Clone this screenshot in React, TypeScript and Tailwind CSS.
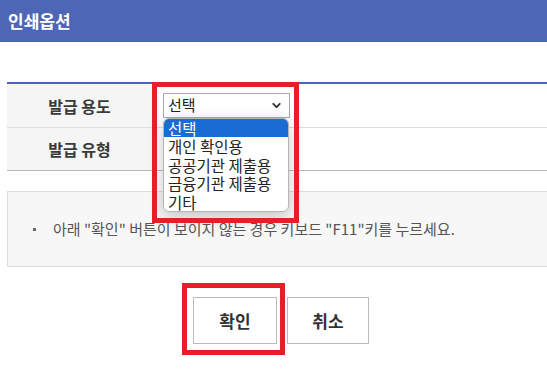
import { ChevronDown } from "lucide-react";

const options = ["선택", "개인 확인용", "공공기관 제출용", "금융기관 제출용", "기타"];

function Row({ label, children, last }: { label: string; children?: React.ReactNode; last?: boolean }) {
  return (
    <div className={`flex ${last ? "h-[42px]" : "h-[44px] border-b border-[#dddddd]"}`}>
      <div className="w-[145px] bg-[#f5f5f5] flex items-center justify-center text-[16px] font-semibold text-[#3a3a3a]">
        {label}
      </div>
      <div className="flex-1 flex items-center pl-[11px] bg-white">{children}</div>
    </div>
  );
}

export default function App() {
  return (
    <div className="relative w-[547px] h-[377px] overflow-hidden bg-white font-['Noto_Sans_CJK_KR',sans-serif]">
      <div className="h-[42px] bg-[#4d66b5] flex items-center pl-2 text-white text-[17px] font-bold">
        인쇄옵션
      </div>

      <div className="w-[600px] pl-[7px] pt-[40px]">
        <div className="border-t-2 border-[#4d66b5] border-b border-b-[#bbbbbb]">
          <Row label="발급 용도">
            <div className="w-[127px] h-[25px] border border-[#a9a9a9] bg-white flex items-center justify-between pl-[4px] pr-[6px] text-[15px] text-[#222222]">
              <span>선택</span>
              <ChevronDown size={13} strokeWidth={3.5} className="text-[#333333]" />
            </div>
          </Row>
          <Row label="발급 유형" last />
        </div>

        <div className="mt-[20px] h-[76px] bg-[#f7f7f7] border border-[#dddddd] flex items-center pl-[25px] gap-[17px] text-[15px] text-[#555555]">
          <span className="w-[3px] h-[3px] bg-[#666666]" />
          <span>아래 "확인" 버튼이 보이지 않는 경우 키보드 "F11"키를 누르세요.</span>
        </div>
      </div>

      <div className="w-[562px] mt-[30px] flex justify-center gap-[10px]">
        <button className="w-[84px] h-[47px] border border-[#bbbbbb] bg-white text-[17px] font-bold text-[#333333]">
          확인
        </button>
        <button className="w-[82px] h-[47px] border border-[#bbbbbb] bg-white text-[17px] font-bold text-[#333333]">
          취소
        </button>
      </div>

      {/* open select list */}
      <div className="absolute left-[163px] top-[118px] w-[126px] rounded-[6px] border border-[#b5b5b5] bg-white overflow-hidden shadow-[0_4px_16px_rgba(0,0,0,0.22)] text-[15.5px] text-[#222222]">
        {options.map((o, i) => (
          <div
            key={o}
            className={`h-[18.4px] leading-[18.4px] pl-[4px] whitespace-nowrap ${i === 0 ? "bg-[#1a6bd4] text-white" : ""}`}
          >
            {o}
          </div>
        ))}
      </div>

      {/* annotation boxes */}
      <div className="absolute left-[152px] top-[82px] w-[147px] h-[141px] border-[5px] border-[#e61e25]" />
      <div className="absolute left-[182px] top-[283px] w-[103px] h-[72px] border-[5px] border-[#e61e25]" />
    </div>
  );
}
